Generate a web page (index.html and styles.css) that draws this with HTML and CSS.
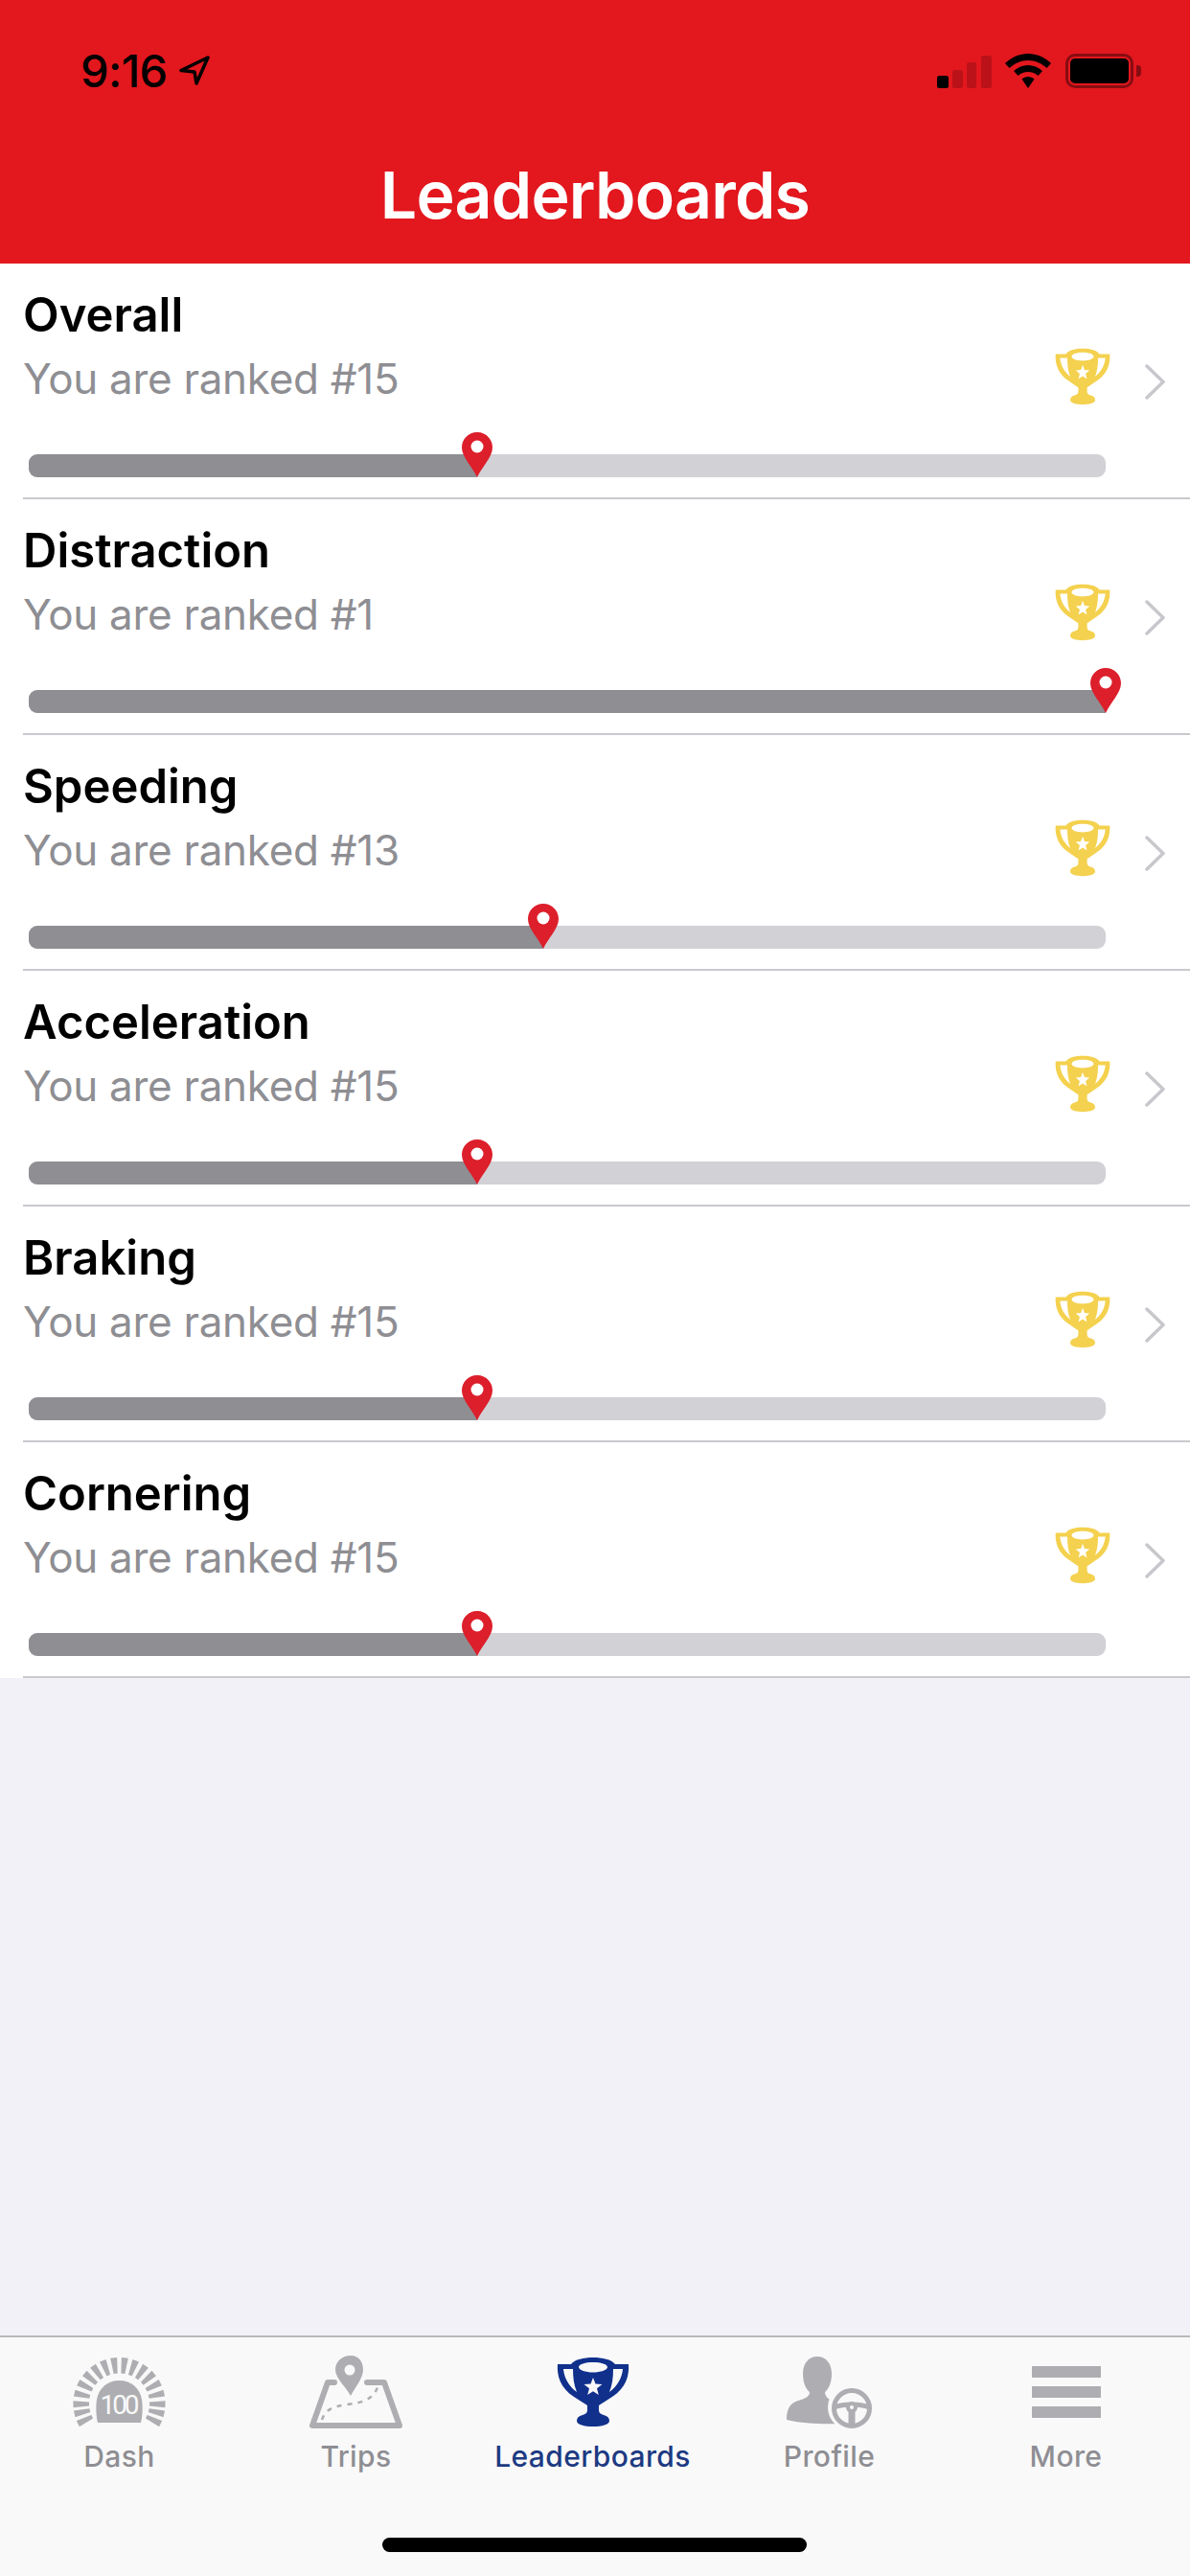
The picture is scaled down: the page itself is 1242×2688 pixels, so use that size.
FILE: index.html
```html
<!DOCTYPE html>
<html lang="en">
<head>
<meta charset="utf-8">
<title>Leaderboards</title>
<link rel="stylesheet" href="styles.css">
</head>
<body>
<svg class="defs" aria-hidden="true">
  <symbol id="trophy" viewBox="0 0 76 74" preserveAspectRatio="none">
    <path fill-rule="evenodd" d="M15 8C19 3 28 1 38 1C48 1 57 3 61 8L75 8C76 20 72 33 58 42C52 46 47 49 44 51L44 56C44 59 46 60 49 61C53 62 55 64 55 67C55 71 47 73 38 73C29 73 21 71 21 67C21 64 23 62 27 61C30 60 32 59 32 56L32 51C29 49 24 46 18 42C4 33 0 20 1 8ZM38 6C30 6 23 8 23 11C23 14 30 16.500 38 16.500C46 16.500 53 14 53 11C53 8 46 6 38 6ZM7 13L17 13C17 22 18 30 21 37C13 31 8 23 7 13ZM69 13L59 13C59 22 58 30 55 37C63 31 68 23 69 13ZM38 22L40.500 28.500L47.500 29L42 33.300L43.800 40L38 36.300L32.200 40L34 33.300L28.500 29L35.500 28.500Z"/>
  </symbol>
  <symbol id="pin" viewBox="0 0 32 47">
    <path fill="#dc1f2b" d="M16 0C7 0 0 7 0 16C0 26 11 36 16 47C21 36 32 26 32 16C32 7 25 0 16 0Z"/>
    <circle fill="#fff" cx="16" cy="15" r="6.500"/>
  </symbol>
  <symbol id="chevron" viewBox="0 0 21 37">
    <path fill="none" stroke="#c7c7cc" stroke-width="3.500" stroke-linecap="round" stroke-linejoin="round" d="M2 2L19 18.500L2 35"/>
  </symbol>
</svg>

<div class="screen">
  <header class="nav">
    <div class="status">
      <div class="status-left">
        <span class="clock">9:16</span>
        <svg class="arrow" viewBox="0 0 32 31"><path fill="none" stroke="#000" stroke-width="3.500" stroke-linejoin="round" d="M30 2L2 15.500L16 17L18 29Z"/></svg>
      </div>
      <div class="status-right">
        <svg class="signal" viewBox="0 0 57 34">
          <rect x="0" y="21" width="12" height="13" rx="2.500" fill="#000"/>
          <rect x="16" y="15" width="11" height="19" rx="2.500" fill="#000" opacity=".18"/>
          <rect x="31" y="7" width="10" height="27" rx="2.500" fill="#000" opacity=".18"/>
          <rect x="46" y="0" width="11" height="34" rx="2.500" fill="#000" opacity=".18"/>
        </svg>
        <svg class="wifi" viewBox="0 0 48 36">
          <path d="M24 0C33 0 41 3.500 48 10L43.500 15C38 10 31.500 7 24 7C16.500 7 10 10 4.500 15L0 10C7 3.500 15 0 24 0Z"/>
          <path d="M24 12C29.500 12 34.500 14 39 18L34.500 23C31.500 20.500 28 19 24 19C20 19 16.500 20.500 13.500 23L9 18C13.500 14 18.500 12 24 12Z"/>
          <path d="M24 24C26.500 24 28.500 25 30.500 26.500L24 36L17.500 26.500C19.500 25 21.500 24 24 24Z"/>
        </svg>
        <div class="battery"><div class="battery-level"></div></div>
      </div>
    </div>
    <h1 class="nav-title">Leaderboards</h1>
  </header>

  <ul class="boards">
    <li class="board">
      <div class="board-head">
        <div class="board-text"><h2>Overall</h2><p>You are ranked #15</p></div>
        <svg class="cup"><use href="#trophy"/></svg>
        <svg class="chev"><use href="#chevron"/></svg>
      </div>
      <div class="track"><div class="fill" style="width:41.6%"><svg class="pin"><use href="#pin"/></svg></div></div>
    </li>
    <li class="board">
      <div class="board-head">
        <div class="board-text"><h2>Distraction</h2><p>You are ranked #1</p></div>
        <svg class="cup"><use href="#trophy"/></svg>
        <svg class="chev"><use href="#chevron"/></svg>
      </div>
      <div class="track"><div class="fill" style="width:100%"><svg class="pin"><use href="#pin"/></svg></div></div>
    </li>
    <li class="board">
      <div class="board-head">
        <div class="board-text"><h2>Speeding</h2><p>You are ranked #13</p></div>
        <svg class="cup"><use href="#trophy"/></svg>
        <svg class="chev"><use href="#chevron"/></svg>
      </div>
      <div class="track"><div class="fill" style="width:47.8%"><svg class="pin"><use href="#pin"/></svg></div></div>
    </li>
    <li class="board">
      <div class="board-head">
        <div class="board-text"><h2>Acceleration</h2><p>You are ranked #15</p></div>
        <svg class="cup"><use href="#trophy"/></svg>
        <svg class="chev"><use href="#chevron"/></svg>
      </div>
      <div class="track"><div class="fill" style="width:41.6%"><svg class="pin"><use href="#pin"/></svg></div></div>
    </li>
    <li class="board">
      <div class="board-head">
        <div class="board-text"><h2>Braking</h2><p>You are ranked #15</p></div>
        <svg class="cup"><use href="#trophy"/></svg>
        <svg class="chev"><use href="#chevron"/></svg>
      </div>
      <div class="track"><div class="fill" style="width:41.6%"><svg class="pin"><use href="#pin"/></svg></div></div>
    </li>
    <li class="board">
      <div class="board-head">
        <div class="board-text"><h2>Cornering</h2><p>You are ranked #15</p></div>
        <svg class="cup"><use href="#trophy"/></svg>
        <svg class="chev"><use href="#chevron"/></svg>
      </div>
      <div class="track"><div class="fill" style="width:41.6%"><svg class="pin"><use href="#pin"/></svg></div></div>
    </li>
  </ul>

  <div class="filler"></div>

  <nav class="tabs">
    <div class="tab">
      <div class="tab-icon">
        <svg class="ico-dash" viewBox="0 0 97 72">
          <g class="rays">
            <polygon points="45,0 52,0 50.500,16.500 46.500,16.500" transform="rotate(-7 48.500 48)"/>
            <polygon points="45,0 52,0 50.500,16.500 46.500,16.500" transform="rotate(7 48.500 48)"/>
            <polygon points="45,0 52,0 50.500,16.500 46.500,16.500" transform="rotate(-21 48.500 48)"/>
            <polygon points="45,0 52,0 50.500,16.500 46.500,16.500" transform="rotate(21 48.500 48)"/>
            <polygon points="45,0 52,0 50.500,16.500 46.500,16.500" transform="rotate(-35 48.500 48)"/>
            <polygon points="45,0 52,0 50.500,16.500 46.500,16.500" transform="rotate(35 48.500 48)"/>
            <polygon points="45,0 52,0 50.500,16.500 46.500,16.500" transform="rotate(-49 48.500 48)"/>
            <polygon points="45,0 52,0 50.500,16.500 46.500,16.500" transform="rotate(49 48.500 48)"/>
            <polygon points="45,0 52,0 50.500,16.500 46.500,16.500" transform="rotate(-63 48.500 48)"/>
            <polygon points="45,0 52,0 50.500,16.500 46.500,16.500" transform="rotate(63 48.500 48)"/>
            <polygon points="45,0 52,0 50.500,16.500 46.500,16.500" transform="rotate(-77 48.500 48)"/>
            <polygon points="45,0 52,0 50.500,16.500 46.500,16.500" transform="rotate(77 48.500 48)"/>
            <polygon points="45,0 52,0 50.500,16.500 46.500,16.500" transform="rotate(-91 48.500 48)"/>
            <polygon points="45,0 52,0 50.500,16.500 46.500,16.500" transform="rotate(91 48.500 48)"/>
            <polygon points="45,0 52,0 50.500,16.500 46.500,16.500" transform="rotate(-103 48.500 48)"/>
            <polygon points="45,0 52,0 50.500,16.500 46.500,16.500" transform="rotate(103 48.500 48)"/>
            <polygon points="45,0 52,0 50.500,16.500 46.500,16.500" transform="rotate(-116 48.500 48)"/>
            <polygon points="45,0 52,0 50.500,16.500 46.500,16.500" transform="rotate(116 48.500 48)"/>
          </g>
          <path d="M26 68C24 60 24 50 25 44C27 32 36 24 48.500 24C61 24 70 32 72 44C73 50 73 60 71 68Z"/>
          <text class="dash-num" x="47.500" y="59" text-anchor="middle">100</text>
        </svg>
      </div>
      <span class="tab-label">Dash</span>
    </div>
    <div class="tab">
      <div class="tab-icon">
        <svg class="ico-trips" viewBox="0 0 97 76">
          <path class="map-edge" d="M26 28H19L3 73H94L78 28H60"/>
          <path d="M43 0C33 0 27 7 27 15C27 23 38 33 43 42C48 33 56 23 56 15C56 7 52 0 43 0Z"/>
          <circle class="map-hole" cx="42" cy="15" r="5.500"/>
          <path class="map-route" d="M13 67C17 55 26 53 40 51C55 49 68 46 72 30"/>
        </svg>
      </div>
      <span class="tab-label">Trips</span>
    </div>
    <div class="tab tab-active">
      <div class="tab-icon">
        <svg class="ico-cup"><use href="#trophy"/></svg>
      </div>
      <span class="tab-label">Leaderboards</span>
    </div>
    <div class="tab">
      <div class="tab-icon">
        <svg class="ico-profile" viewBox="0 0 89 75">
          <path d="M32 0C41 0 47 7 47 18C47 27 44 34 40 37C40 42 44 45 50 47C56 49 60 52 60 62L60 70C40 71 16 70 0 66C0 55 3 49 12 46C19 44 24 42 24 37C20 34 17 27 17 18C17 7 23 0 32 0Z"/>
          <circle class="wheel-gap" cx="67" cy="53" r="24"/>
          <circle class="wheel-rim" cx="68" cy="54" r="18.500"/>
          <path class="wheel-spoke" d="M50 53C60 49 76 49 86 53"/>
          <path class="wheel-stem" d="M68 56V72"/>
          <circle class="wheel-hub" cx="68" cy="53" r="4"/>
        </svg>
      </div>
      <span class="tab-label">Profile</span>
    </div>
    <div class="tab">
      <div class="tab-icon">
        <div class="ico-more"><i></i><i></i><i></i></div>
      </div>
      <span class="tab-label">More</span>
    </div>
    <div class="home-bar"></div>
  </nav>
</div>
</body>
</html>
```

FILE: styles.css
```css
* {
  box-sizing: border-box;
}

html,
body {
  margin: 0;
  padding: 0;
}

body {
  font-family: Inter, "Liberation Sans", sans-serif;
  background: #f2f1f7;
}

.defs {
  position: absolute;
  width: 0;
  height: 0;
}

.screen {
  width: 1242px;
  height: 2688px;
  display: flex;
  flex-direction: column;
  overflow: hidden;
}

/* Red navigation header with the phone status row */
.nav {
  height: 275px;
  background: #e3171e;
  display: flex;
  flex-direction: column;
  padding-top: 55px;
}

.status {
  height: 37px;
  display: flex;
  justify-content: space-between;
  align-items: center;
  padding: 0 59px 0 84px;
}

.status-left {
  display: flex;
  align-items: center;
  gap: 12px;
}

.clock {
  font-size: 47px;
  line-height: 37px;
  font-weight: 500;
  letter-spacing: -.6px;
  color: #000;
}

.arrow {
  width: 32px;
  height: 31px;
}

.status-right {
  display: flex;
  align-items: center;
}

.signal {
  width: 57px;
  height: 34px;
  margin-top: 2px;
  margin-right: 14px;
}

.wifi {
  width: 48px;
  height: 36px;
  margin-right: 15px;
}

.battery {
  position: relative;
  width: 71px;
  height: 36px;
  padding: 2px;
  border: 3px solid rgba(0, 0, 0, .4);
  border-radius: 10px;
}

.battery::after {
  content: "";
  position: absolute;
  right: -11px;
  top: 9px;
  width: 5px;
  height: 12px;
  border-radius: 0 4px 4px 0;
  background: rgba(0, 0, 0, .4);
}

.battery-level {
  height: 100%;
  background: #000;
  border-radius: 5px;
}

.nav-title {
  margin: 73px 0 0;
  text-align: center;
  font-size: 68px;
  line-height: 76px;
  font-weight: 600;
  letter-spacing: -.8px;
  color: #fff;
}

/* Leaderboard rows */
.boards {
  list-style: none;
  margin: 0;
  padding: 0;
  background: #fff;
}

.board {
  height: 246px;
  margin-left: 24px;
  border-bottom: 2px solid #c9c9ce;
}

.board-head {
  height: 199px;
  display: flex;
  align-items: flex-start;
  padding-right: 26px;
}

.board-text {
  flex: 1;
  padding-top: 25px;
}

.board-text h2 {
  margin: 0;
  font-size: 49px;
  line-height: 58px;
  font-weight: 600;
  color: #000;
}

.board-text p {
  margin: 8px 0 0;
  font-size: 44px;
  line-height: 58px;
  font-weight: 400;
  letter-spacing: -.3px;
  color: #8e8e93;
}

.cup {
  width: 58px;
  height: 60px;
  margin-top: 88px;
  color: #f4d14e;
  fill: currentColor;
}

.chev {
  width: 21px;
  height: 37px;
  margin-top: 105px;
  margin-left: 36px;
}

.track {
  width: 1124px;
  height: 24px;
  margin-left: 6px;
  border-radius: 9px;
  background: #d1d1d6;
}

.fill {
  position: relative;
  height: 100%;
  border-radius: 9px 0 0 9px;
  background: #8e8e93;
}

.pin {
  position: absolute;
  right: -16px;
  bottom: 0;
  width: 32px;
  height: 47px;
}

.filler {
  flex: 1;
}

/* Bottom tab bar */
.tabs {
  position: relative;
  height: 251px;
  display: grid;
  grid-template-columns: repeat(5, 247px);
  align-content: start;
  padding: 18px 0 0 1px;
  border-top: 2px solid #b9b9bc;
  background: #f9f9f9;
}

.tab {
  display: flex;
  flex-direction: column;
  align-items: center;
  color: #aeaeb2;
  fill: #aeaeb2;
}

.tab-active {
  color: #10308c;
  fill: #10308c;
}

.tab-icon {
  height: 78px;
  display: flex;
  align-items: center;
  justify-content: center;
}

.tab-label {
  margin-top: 8px;
  font-size: 30px;
  line-height: 40px;
  font-weight: 500;
  letter-spacing: .4px;
  color: #8e8e93;
}

.tab-active .tab-label {
  color: #1c3a82;
}

.ico-dash {
  width: 97px;
  height: 72px;
}

.dash-num {
  font-family: Roboto, sans-serif;
  font-size: 28px;
  letter-spacing: -3px;
  fill: #f9f9f9;
}

.ico-trips {
  width: 97px;
  height: 76px;
}

.map-edge {
  fill: none;
  stroke: #aeaeb2;
  stroke-width: 6;
  stroke-linejoin: round;
  stroke-linecap: round;
}

.map-hole {
  fill: #f9f9f9;
}

.map-route {
  fill: none;
  stroke: #aeaeb2;
  stroke-width: 2.500;
  stroke-dasharray: 5 6;
}

.ico-cup {
  width: 76px;
  height: 74px;
}

.ico-profile {
  width: 89px;
  height: 75px;
}

.wheel-gap {
  fill: #f9f9f9;
}

.wheel-rim,
.wheel-spoke,
.wheel-stem {
  fill: none;
  stroke: #aeaeb2;
  stroke-width: 5;
}

.wheel-stem {
  stroke-width: 7;
}

.wheel-hub {
  fill: #f9f9f9;
  stroke: #aeaeb2;
  stroke-width: 4;
}

.ico-more {
  width: 72px;
  display: flex;
  flex-direction: column;
  gap: 9px;
}

.ico-more i {
  display: block;
  height: 12px;
  background: #aeaeb2;
}

.home-bar {
  position: absolute;
  left: 399px;
  top: 209px;
  width: 443px;
  height: 15px;
  border-radius: 8px;
  background: #000;
}
```
